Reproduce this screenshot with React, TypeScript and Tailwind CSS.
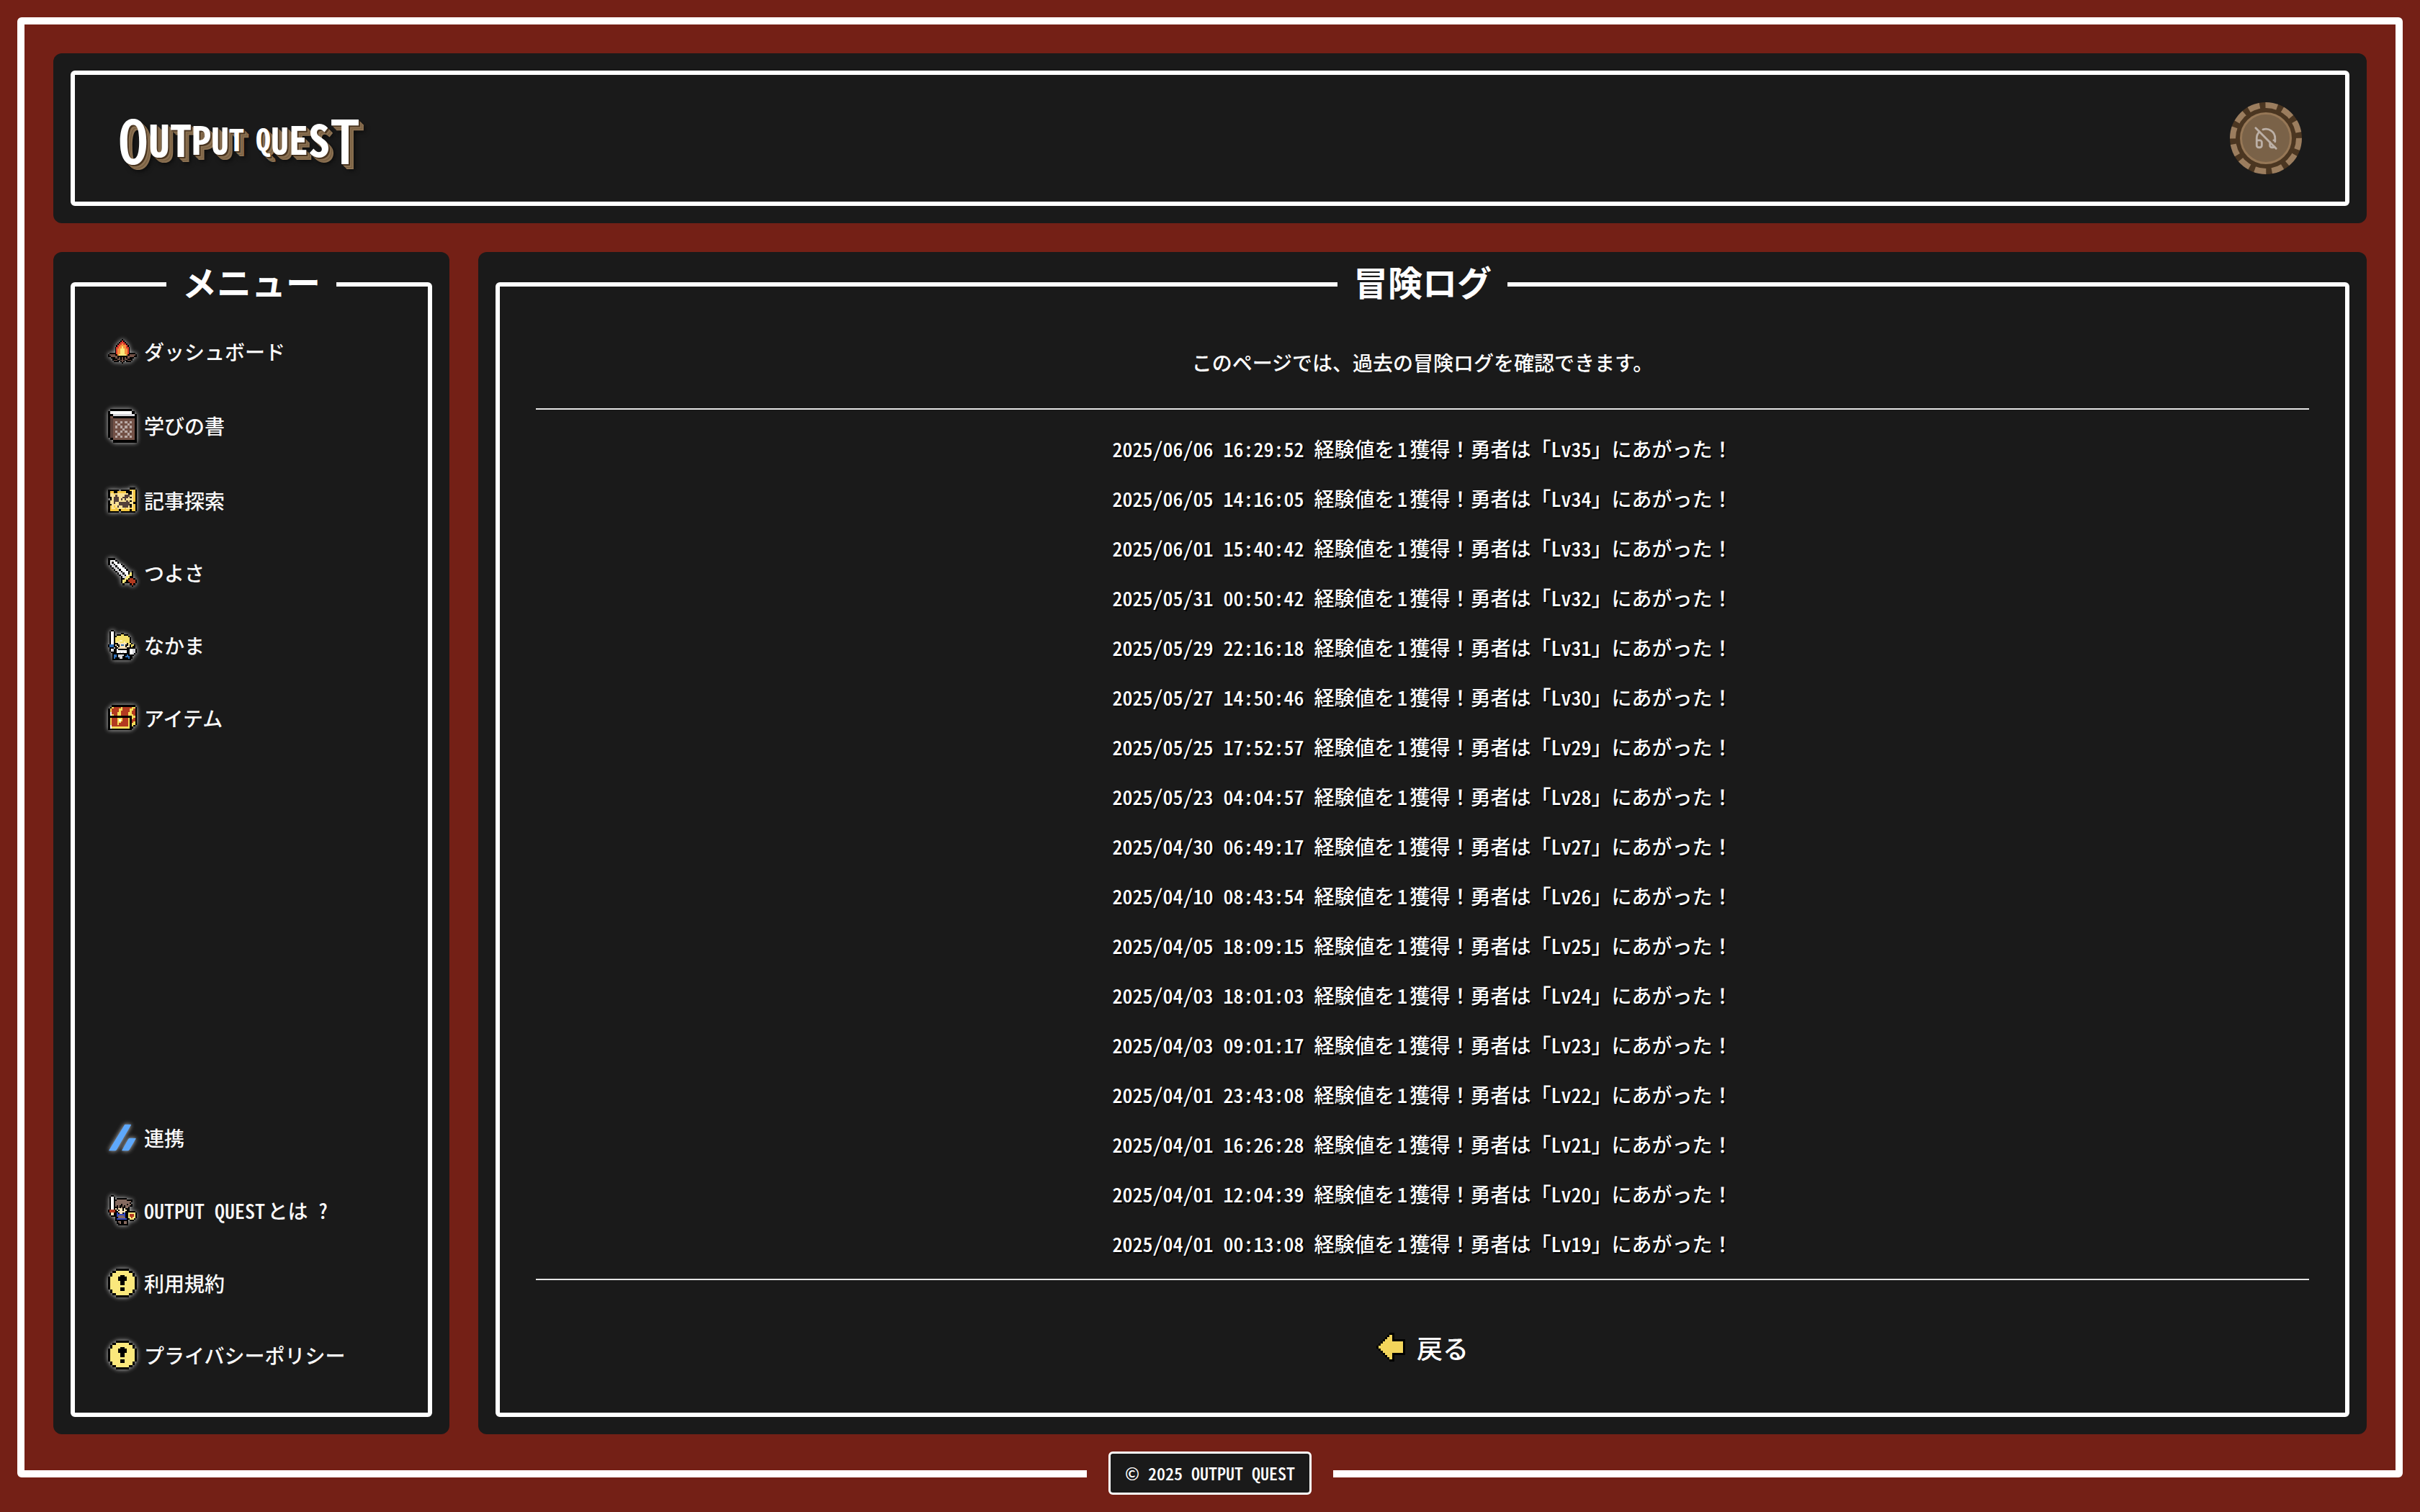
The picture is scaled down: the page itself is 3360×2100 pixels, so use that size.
import React from "react";
import { HeadphoneOff } from "lucide-react";

const BASE: Record<string, string> = {
  k: "#000000",
  w: "#ffffff",
  l: "#d4d4d8",
  y: "#fbe87c",
  r: "#b23a20",
  o: "#f4923c",
  s: "#fde3b8",
  n: "#2f6fb8",
  c: "#fff3b0",
  d: "#54403a",
  b: "#735146",
  p: "#b8a8a4",
  h: "#85695f",
};

const FIRE = [
  "..........k..........",
  ".........krk.........",
  "........krrrk........",
  ".......krrorrk.......",
  "......krroooork......",
  "......krooyoork......",
  ".....krrooyoorrk.....",
  ".....krooyyyoork.....",
  ".....krooyyyoork.....",
  ".....krooyyyoork.....",
  ".kkkkkrooyyyoorkkkkk.",
  "kbbbbkkoyyyyyokkbbbbk",
  "kkbbbbbkkkkkkkbbbbbkk",
  "..kkkbbkbkbkbkbbkkk..",
  "...kkkkbbkbkbbkkkk...",
  "...kbbbkkbbbkkbbbk...",
  "....kkkk.kbk.kkkk....",
  "..........k..........",
];

const BOOK = [
  ".kkkkkkkkk..",
  "kwwwwwwwwwk.",
  "kklllllllllk",
  "kbkkkkkkkkkk",
  "kdbbbbbbbbbk",
  "kdbpbpbpbpbk",
  "kdbbpbbbpbbk",
  "kdbpbpbpbpbk",
  "kdbbbbpbbbbk",
  "kdbpbpbpbpbk",
  "kdbbpbbbpbbk",
  "kdbpbpbpbpbk",
  ".kbbbbbbbbbk",
  "..kkkkkkkkkk",
];

const MAP = [
  "............kkk.",
  "kkkkkk.kkkkkocok",
  "kookkoooookkkcok",
  "kccoccccccckkcok",
  "kcccdccccdddccok",
  "kkcdddccdddckcok",
  ".kcdddcdcdccccok",
  "kccdddccccdckcok",
  "kccdccddddddcckk",
  "kkccccddddddkcok",
  "kococdccdddckcok",
  "koccoccccoccocok",
  "koooookoooookook",
  "kkkkkk.kkkkkkkk.",
];

const SWORD = [
  "kkkk............",
  "kwwwk...........",
  "kwkwwk..........",
  "kllkwwwk........",
  ".kllkwwwk.......",
  "..kllkwwwk......",
  "...kllkwwwk.....",
  "....kllkwwwk.k..",
  ".....kllkwwkyk..",
  "......kllkwyyk..",
  ".......kllyykk..",
  ".......kkyykrrk.",
  ".......kyykrrrrk",
  ".......kykkkrrrk",
  "........k...krk.",
  ".............k..",
];

const KNIGHT = [
  "..kk................",
  ".kwwk...............",
  ".kwwk....kk.........",
  ".kwwk.kkkyykkk......",
  ".kwwkkyyyyyyyyk.....",
  ".kwwkyyyyyyyyyyk....",
  ".kwwkyyyyyyyyyyk....",
  ".kwwkyyyccyyyyyk....",
  ".kwwkycsyyycyyyk....",
  ".kwwkkksssssskyyk...",
  "knnnkskksnnskkskyyk.",
  "knnnkkskssssksskykk.",
  ".kkk.kksssssskkkkkk.",
  ".kwlkkwkkkkkkkkwwllk",
  ".kllkkwwwwwwwkkwwllk",
  "..kkkkwwlwlwwkkwwllk",
  "...kkkkkkkkkkkkwwlk.",
  "...knnkllllkknkkkk..",
  "...knnklllkknnnkk...",
  "...knkkkllkkkknkk...",
  "...kkkkkkkkkkkkk....",
];

const HERO = [
  "..kk................",
  ".kwwk...............",
  ".kwwk.kkkkkkk.......",
  ".kwwkkhhhhhhhkkkk...",
  ".kwwkhhhhhhhhhhhk...",
  ".kwwkhhhhhhhhhhk....",
  ".kwwkhhhhkhhhkhhk...",
  ".kwwkhkhkkhkhhhkk...",
  ".kwwkkkhkhkkhhk.....",
  ".kwwkskssskskkk.....",
  "krrrrkskssksskk.....",
  "krrrrkkssssskkkkkkk.",
  ".ksskknkssknkkyyyyyk",
  ".ksskknnnnnnkkyrrryk",
  "..kkkknhhhhnkkyrrryk",
  ".....kkhhhhhkkyyryyk",
  ".....knnnnnnnkkyyyk.",
  ".....kkkkkkkkk.kkk..",
  "......khhkkhhk......",
  "......kkhkkhhk......",
  ".......kkkkkkk......",
];

const CHEST = [
  "..kkkkkkkkkkkkk.",
  ".kyrrrryrrrrryyk",
  "kyrrrryyrrrryyrk",
  "kyrrrryrrrrryrrk",
  "kwrrryyrrrryyrrk",
  "kwyrryyrrrryyyrk",
  "kkkkkkkkkkkkkyyk",
  "kyrrryyyrrrykyrk",
  "kyrrrywyrrrykrrk",
  "kyrrryyrrrrykryk",
  "kyrrryrrrrrykyyk",
  "kwrrrrrrrrrykyk.",
  "kwyyyyyyyyyykk..",
  "kkkkkkkkkkkkk...",
];

const NOTICE = [
  "....kkkkkk....",
  "..kkyyyyyykk..",
  ".kyyyyyyyyyyk.",
  ".kyyyykkyyyyk.",
  "kyyyykkkkyyyyk",
  "kyyyykkkkyyyyk",
  "kyyyyykkyyyyyk",
  "kyyyyykkyyyyyk",
  "kyyyyyyyyyyyyk",
  "kyyyyykkyyyyyk",
  ".kyyyykkyyyyk.",
  ".kyyyyyyyyyyk.",
  "..kkyyyyyykk..",
  "....kkkkkk....",
];

const ARROW = [
  "......kk.....",
  ".....kyk.....",
  "....kyyk.....",
  "...kyyykkkkkk",
  "..kyyyyyyyyyk",
  ".kyyyyyyyyyyk",
  "kyyyyyyyyyyyk",
  ".kyyyyyyyyyyk",
  "..kyyyyyyyyyk",
  "...kyyykkkkkk",
  "....kyyk.....",
  ".....kyk.....",
  "......kk.....",
];

const GLOW = "drop-shadow-[0_0_3px_rgba(255,255,255,0.75)]";

function PixelArt({
  rows,
  colors,
  glow = true,
}: {
  rows: string[];
  colors?: Record<string, string>;
  glow?: boolean;
}) {
  const palette = { ...BASE, ...colors };
  return (
    <svg
      viewBox={`0 0 ${rows[0].length} ${rows.length}`}
      shapeRendering="crispEdges"
      aria-hidden="true"
      className={`h-auto w-10 shrink-0 ${glow ? GLOW : ""}`}
    >
      {rows.flatMap((row, y) =>
        [...row].map((c, x) =>
          c === "." ? null : (
            <rect key={`${x}-${y}`} x={x} y={y} width="1" height="1" fill={palette[c]} />
          ),
        ),
      )}
    </svg>
  );
}

function ZennMark() {
  return (
    <svg viewBox="0 0 120 114" aria-hidden="true" className={`h-auto w-10 shrink-0 ${GLOW}`}>
      <g fill="#5ea8fb" stroke="#5ea8fb" strokeWidth="4" strokeLinejoin="round">
        <path d="M71 4H94L34 107Q32 110 29 110H6Z" />
        <path d="M92 61H114L87 107Q85 110 82 110H60L86 64Q88 61 92 61Z" />
      </g>
    </svg>
  );
}

/** Full-width punctuation, exempt from the half-width Latin forms used elsewhere. */
function Wide({ children }: { children: string }) {
  return <span className="[font-feature-settings:normal]">{children}</span>;
}

const MENU = [
  { label: "ダッシュボード", icon: <PixelArt rows={FIRE} colors={{ r: "#dc3a2e" }} /> },
  { label: "学びの書", icon: <PixelArt rows={BOOK} /> },
  { label: "記事探索", icon: <PixelArt rows={MAP} colors={{ o: "#f5c842", c: "#fbe296" }} /> },
  { label: "つよさ", icon: <PixelArt rows={SWORD} /> },
  { label: "なかま", icon: <PixelArt rows={KNIGHT} colors={{ y: "#f5e06a" }} /> },
  { label: "アイテム", icon: <PixelArt rows={CHEST} colors={{ y: "#f6dc58" }} /> },
];

const LINKS = [
  { label: "連携", icon: <ZennMark /> },
  { label: "OUTPUT QUESTとは ？", icon: <PixelArt rows={HERO} colors={{ n: "#3448c0" }} /> },
  { label: "利用規約", icon: <PixelArt rows={NOTICE} /> },
  { label: "プライバシーポリシー", icon: <PixelArt rows={NOTICE} /> },
];

const LOGS: [string, number][] = [
  ["2025/06/06 16:29:52", 35],
  ["2025/06/05 14:16:05", 34],
  ["2025/06/01 15:40:42", 33],
  ["2025/05/31 00:50:42", 32],
  ["2025/05/29 22:16:18", 31],
  ["2025/05/27 14:50:46", 30],
  ["2025/05/25 17:52:57", 29],
  ["2025/05/23 04:04:57", 28],
  ["2025/04/30 06:49:17", 27],
  ["2025/04/10 08:43:54", 26],
  ["2025/04/05 18:09:15", 25],
  ["2025/04/03 18:01:03", 24],
  ["2025/04/03 09:01:17", 23],
  ["2025/04/01 23:43:08", 22],
  ["2025/04/01 16:26:28", 21],
  ["2025/04/01 12:04:39", 20],
  ["2025/04/01 00:13:08", 19],
];

function Logo() {
  return (
    <a
      href="#"
      aria-label="OUTPUT QUEST"
      className="flex items-center font-bold leading-none text-white [text-shadow:1px_1px_0_#4b3621,2px_2px_0_#4b3621,3px_3px_0_#8b7152,4px_4px_0_#8b7152,5px_5px_0_#765d40,6px_6px_0_#8b7152,7px_7px_0_#8b7152,9px_9px_6px_rgba(0,0,0,0.6)]"
    >
      <span className="text-[84px] font-medium">O</span>
      <span className="text-[60px]">U</span>
      <span className="text-[60px]">T</span>
      <span className="text-[54px]">P</span>
      <span className="text-[50px]">U</span>
      <span className="mr-4 text-[42px]">T</span>
      <span className="text-[42px]">Q</span>
      <span className="text-[50px]">U</span>
      <span className="text-[54px]">E</span>
      <span className="text-[60px]">S</span>
      <span className="text-[84px] font-medium">T</span>
    </a>
  );
}

function MenuList({ items }: { items: { label: string; icon: React.ReactNode }[] }) {
  return (
    <ul className="flex flex-col gap-15">
      {items.map((item) => (
        <li key={item.label}>
          <a href="#" className="flex items-center gap-2.5 text-[28px] leading-10 text-neutral-50">
            {item.icon}
            <span className="whitespace-nowrap">{item.label}</span>
          </a>
        </li>
      ))}
    </ul>
  );
}

function Title({ children }: { children: React.ReactNode }) {
  return (
    <h2 className="-mt-8 self-center bg-[#1a1a1a] px-[22px] text-5xl leading-[48px] font-bold">
      {children}
    </h2>
  );
}

export default function App() {
  return (
    <div className="flex min-h-screen flex-col bg-[#742016] p-6 font-['Noto_Sans_CJK_JP','Noto_Sans_CJK_SC',sans-serif] font-medium text-white [font-feature-settings:'hwid'] [text-autospace:normal]">
      <div className="flex flex-1 flex-col gap-10 rounded-md border-[10px] border-white px-10 pt-10 pb-[50px]">
        <header className="rounded-xl bg-[#1a1a1a] p-6">
          <div className="flex h-[188px] items-center justify-between rounded-md border-6 border-white px-[60px]">
            <Logo />
            <button
              type="button"
              aria-label="サウンドをオンにする"
              className="flex size-[100px] items-center justify-center rounded-full border-8 border-dashed border-[#9b7d5e] bg-[#4b3621]"
            >
              <span className="flex size-[72px] items-center justify-center rounded-full border-3 border-[#967756] bg-[#7a6248]">
                <HeadphoneOff className="size-[34px] text-[#bcb0a6]" />
              </span>
            </button>
          </div>
        </header>

        <div className="flex flex-1 gap-10">
          <nav aria-label="メニュー" className="flex w-[550px] shrink-0 rounded-xl bg-[#1a1a1a] px-6 pt-[42px] pb-6">
            <div className="flex flex-1 flex-col rounded-md border-6 border-white">
              <Title>メニュー</Title>
              <div className="flex flex-1 flex-col justify-between gap-15 pt-[54px] pb-15 pl-[46px]">
                <MenuList items={MENU} />
                <MenuList items={LINKS} />
              </div>
            </div>
          </nav>

          <main className="flex flex-1 rounded-xl bg-[#1a1a1a] px-6 pt-[42px] pb-6">
            <div className="flex flex-1 flex-col rounded-md border-6 border-white px-[50px]">
              <Title>冒険ログ</Title>
              <p className="mt-[69px] text-center text-[28px] leading-10">
                このページでは、過去の冒険ログを確認できます。
              </p>
              <ul className="mt-11 flex flex-col gap-6 border-y-2 border-neutral-200 pt-8 pb-[26px] text-center text-[28px] leading-[45px] [text-shadow:2px_2px_0_#000]">
                {LOGS.map(([time, level]) => (
                  <li key={level}>
                    {time} 経験値を1獲得<Wide>！</Wide>勇者は「Lv{level}」にあがった<Wide>！</Wide>
                  </li>
                ))}
              </ul>
              <a
                href="#"
                className="mt-[68px] flex items-center gap-4 self-center text-4xl leading-[50px]"
              >
                <PixelArt rows={ARROW} colors={{ y: "#f3d55b" }} glow={false} />
                戻る
              </a>
            </div>
          </main>
        </div>
      </div>

      <footer className="-mt-9 self-center bg-[#742016] px-[30px]">
        <p className="rounded-md border-3 border-white bg-[#1a1a1a] px-5 text-2xl leading-[54px]">
          © 2025 OUTPUT QUEST
        </p>
      </footer>
    </div>
  );
}
